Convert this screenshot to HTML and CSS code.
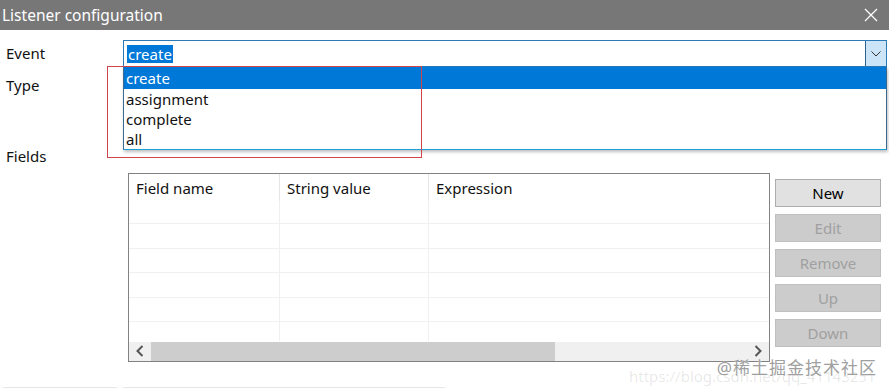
FILE: index.html
```html
<!DOCTYPE html>
<html lang="en">
<head>
  <meta charset="UTF-8" />
  <title>Listener configuration</title>
  <link rel="stylesheet" href="styles.css">
</head>
<body>
  <div class="dialog">
    <div class="titlebar">
      <span class="title">Listener configuration</span>
      <svg class="close" width="14" height="14" viewBox="0 0 14 14">
        <path d="M1 1 L13 13 M13 1 L1 13" stroke="#fff" stroke-width="1.3" fill="none"/>
      </svg>
    </div>

    <div class="content">
      <div class="row">
        <label class="lbl">Event</label>
        <div class="combo">
          <div class="combo-value"><span class="sel">create</span></div>
          <div class="combo-btn">
            <svg width="10" height="6" viewBox="0 0 10 6">
              <path d="M0.5 0.5 L5 5 L9.5 0.5" stroke="#333" stroke-width="1" fill="none"/>
            </svg>
          </div>
        </div>
      </div>

      <div class="row row-type">
        <label class="lbl">Type</label>
      </div>

      <div class="row row-fields">
        <label class="lbl">Fields</label>
      </div>

      <div class="fields-area">
        <div class="grid">
          <div class="grid-head">
            <div class="cell c1">Field name</div>
            <div class="cell c2">String value</div>
            <div class="cell c3">Expression</div>
          </div>
          <div class="grid-row first"><div class="cell c1"></div><div class="cell c2"></div><div class="cell c3"></div></div>
          <div class="grid-row"><div class="cell c1"></div><div class="cell c2"></div><div class="cell c3"></div></div>
          <div class="grid-row"><div class="cell c1"></div><div class="cell c2"></div><div class="cell c3"></div></div>
          <div class="grid-row"><div class="cell c1"></div><div class="cell c2"></div><div class="cell c3"></div></div>
          <div class="grid-row"><div class="cell c1"></div><div class="cell c2"></div><div class="cell c3"></div></div>
          <div class="grid-row last"><div class="cell c1"></div><div class="cell c2"></div><div class="cell c3"></div></div>
          <div class="hscroll">
            <div class="arrow">
              <svg width="8" height="12" viewBox="0 0 8 12"><path d="M6.5 1 L1.5 6 L6.5 11" stroke="#555" stroke-width="2" fill="none"/></svg>
            </div>
            <div class="thumb"></div>
            <div class="track"></div>
            <div class="arrow">
              <svg width="8" height="12" viewBox="0 0 8 12"><path d="M1.5 1 L6.5 6 L1.5 11" stroke="#555" stroke-width="2" fill="none"/></svg>
            </div>
          </div>
        </div>

        <div class="buttons">
          <button class="btn">New</button>
          <button class="btn" disabled>Edit</button>
          <button class="btn" disabled>Remove</button>
          <button class="btn" disabled>Up</button>
          <button class="btn" disabled>Down</button>
        </div>
      </div>

      <div class="bottom-lines">
        <div class="bline b1"></div>
        <div class="bline b2"></div>
      </div>
    </div>

    <ul class="dropdown">
      <li class="active">create</li>
      <li>assignment</li>
      <li>complete</li>
      <li>all</li>
    </ul>

    <div class="mark-box"></div>

    <div class="watermark">
      <span class="wm-url">https://blog.csdn.net/qq_41143251</span>
      <span class="wm-main">@稀土掘金技术社区</span>
    </div>
  </div>
</body>
</html>
```

FILE: styles.css
```css
html, body {
  margin: 0;
  padding: 0;
  background: #fff;
}

body {
  font-family: "Noto Sans", "Noto Sans CJK SC", sans-serif;
  font-size: 15px;
  color: #111;
}

.dialog {
  position: relative;
  width: 889px;
  height: 389px;
  overflow: hidden;
  background: #fff;
}

.titlebar {
  height: 30px;
  background: #777777;
  display: flex;
  align-items: center;
  justify-content: space-between;
  padding: 0 11px 0 2px;
}

.title {
  color: #fff;
  font-size: 15.5px;
}

.close {
  display: block;
}

.content {
  padding-top: 10px;
}

.row {
  display: flex;
  height: 27px;
  align-items: center;
}

.lbl {
  width: 117px;
  padding-left: 6px;
  line-height: 27px;
}

.row-type {
  margin-top: 5px;
}

.row-fields {
  margin-top: 44px;
}

/* combobox */
.combo {
  flex: 1;
  margin-right: 2px;
  height: 25px;
  border: 1px solid #2a7ab8;
  display: flex;
}

.combo-value {
  flex: 1;
  padding: 3px 0 0 3px;
}

.sel {
  background: #0078d7;
  color: #fff;
  line-height: 18px;
  display: inline-block;
  padding: 0 1px;
}

.combo-btn {
  width: 20px;
  background: #cce4f7;
  border-left: 1px solid #2c628b;
  display: flex;
  align-items: center;
  justify-content: center;
}

/* dropdown popup */
.dropdown {
  position: absolute;
  left: 123px;
  top: 67px;
  width: 762px;
  margin: 0;
  padding: 0;
  list-style: none;
  background: #fff;
  border-left: 1px solid #3a6a90;
  border-right: 1px solid #3a6a90;
  border-bottom: 1px solid #1aa0d8;
  box-shadow: 1px 2px 3px rgba(0, 0, 0, 0.25);
}

.dropdown li {
  height: 20px;
  line-height: 20px;
  padding-left: 2px;
}

.dropdown li.active {
  height: 22px;
  line-height: 22px;
  background: #0078d7;
  color: #fff;
}

.mark-box {
  position: absolute;
  left: 107px;
  top: 66px;
  width: 313px;
  height: 90px;
  border: 1px solid #d0454c;
}

/* fields grid */
.fields-area {
  display: flex;
  margin-top: 3px;
  padding-left: 128px;
}

.grid {
  width: 640px;
  height: 187px;
  border: 1px solid #828282;
  display: flex;
  flex-direction: column;
}

.grid-head,
.grid-row {
  display: flex;
}

.grid-head {
  height: 27px;
}

.grid-head .cell {
  padding-left: 7px;
  line-height: 29px;
  border-right: 1px solid #e6e6e6;
}

.grid-row {
  height: 24px;
  border-top: 1px solid #f0f0f0;
}

.grid-row.first {
  height: 23px;
  border-top: none;
}

.grid-row.last {
  height: 20px;
}

.grid-row .cell {
  border-right: 1px solid #f0f0f0;
}

.cell {
  box-sizing: border-box;
}

.c1 { width: 151px; }
.c2 { width: 149px; }
.c3 { flex: 1; border-right: none !important; }

.hscroll {
  height: 20px;
  margin-top: auto;
  display: flex;
  background: #f0f0f0;
}

.arrow {
  width: 22px;
  display: flex;
  align-items: center;
  justify-content: center;
}

.thumb {
  width: 404px;
  background: #cdcdcd;
}

.track {
  flex: 1;
}

.buttons {
  margin-left: 5px;
  padding-top: 6px;
  display: flex;
  flex-direction: column;
  gap: 7px;
}

.btn {
  width: 106px;
  height: 28px;
  font-family: inherit;
  font-size: 15px;
  color: #000;
  background: #e1e1e1;
  border: 1px solid #adadad;
  padding: 0;
}

.btn:disabled {
  color: #a0a0a0;
  background: #cccccc;
  border-color: #bfbfbf;
}

.bottom-lines {
  display: flex;
  margin-top: 25px;
}

.bline {
  height: 1px;
  background: #e6e6e6;
}

.b1 {
  margin-left: 3px;
  width: 114px;
}

.b2 {
  margin-left: 6px;
  width: 322px;
}

/* watermark */
.watermark {
  position: absolute;
  right: 0;
  top: 354px;
  width: 260px;
  height: 32px;
  pointer-events: none;
}

.wm-url {
  position: absolute;
  left: 0;
  top: 12px;
  font-size: 15px;
  color: rgba(0, 0, 0, 0.1);
  white-space: nowrap;
}

.wm-main {
  position: absolute;
  right: 12px;
  top: 0;
  font-size: 17px;
  color: #a0a0a0;
  letter-spacing: 1px;
  white-space: nowrap;
  text-shadow: 0 0 2px #fff;
}
```
